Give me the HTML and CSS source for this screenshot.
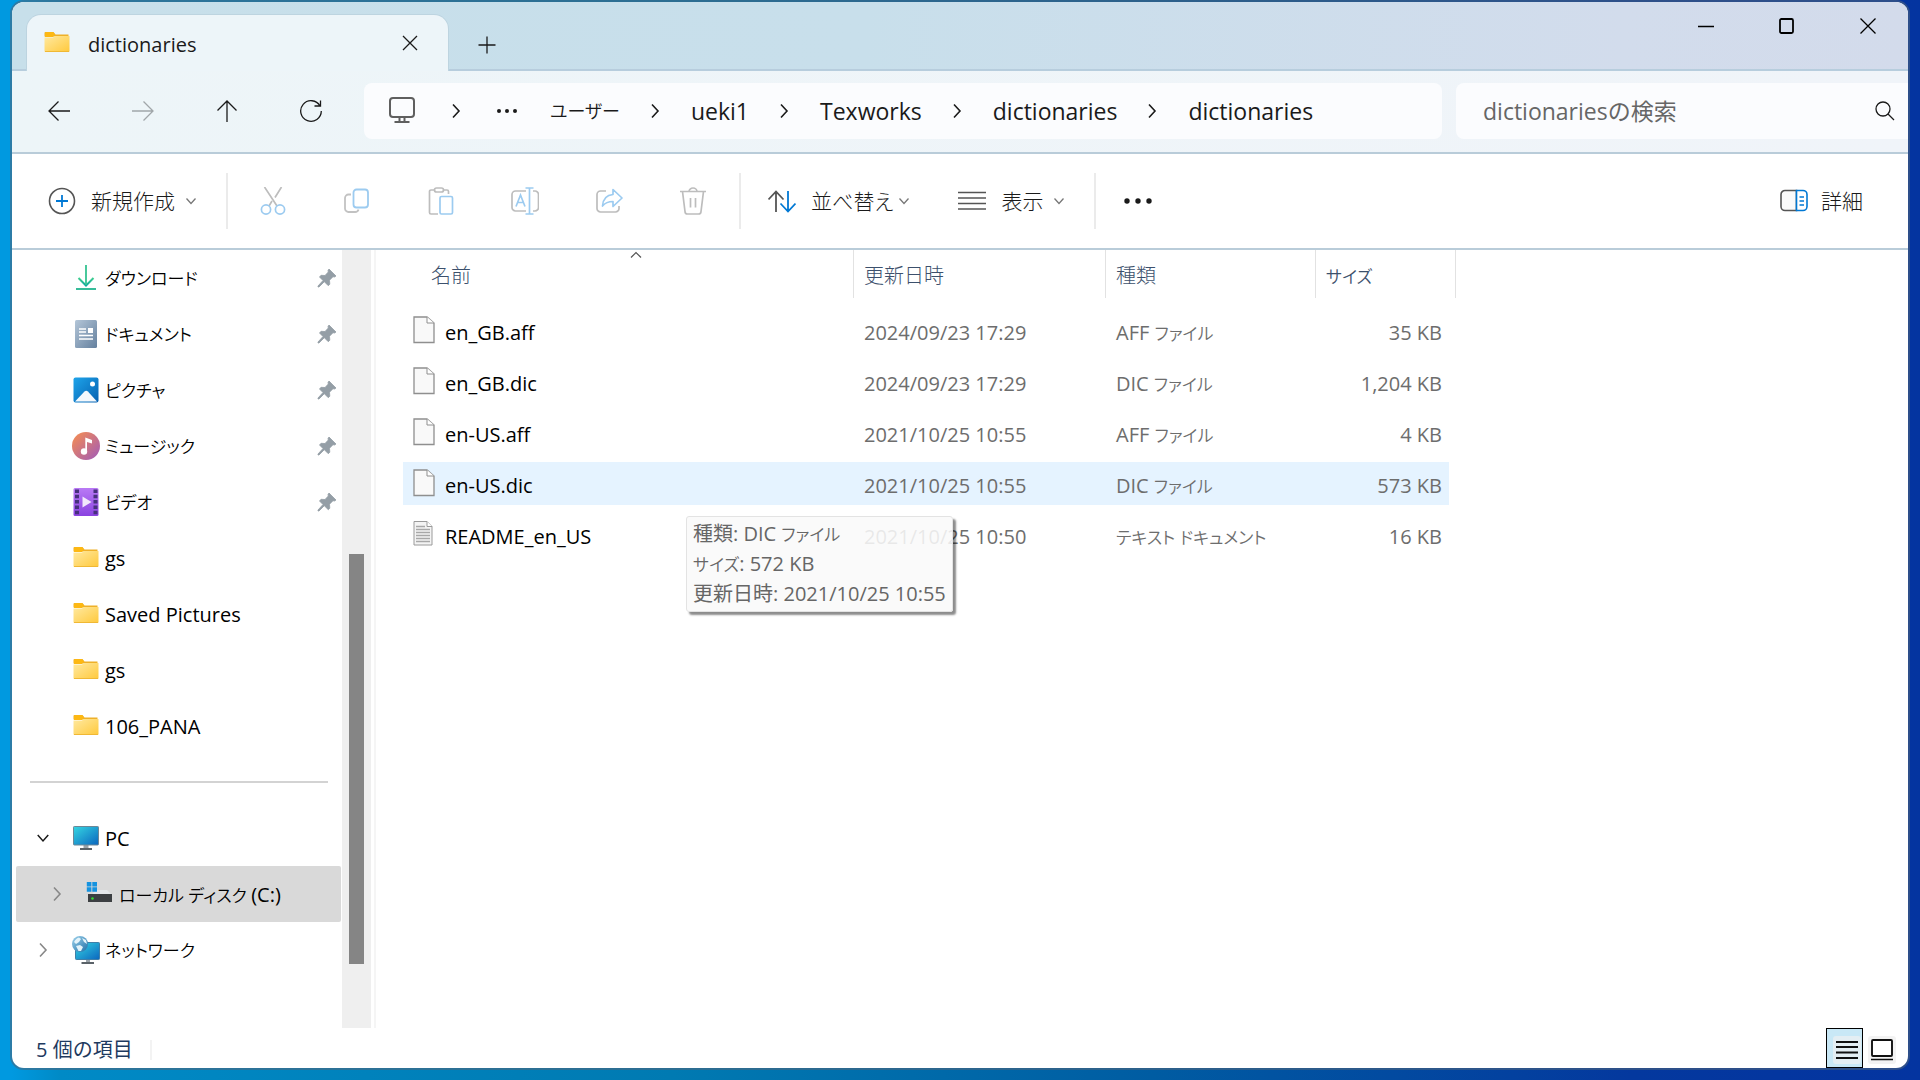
FILE: index.html
```html
<!DOCTYPE html>
<html lang="ja">
<head>
<meta charset="utf-8">
<meta name="viewport" content="width=device-width, initial-scale=1">
<title>dictionaries</title>
<link rel="stylesheet" href="styles.css">
</head>
<body>
<svg class="defs" width="0" height="0" aria-hidden="true">
  <defs>
    <linearGradient id="g-folder" x1="0" y1="0" x2="1" y2="1"><stop offset="0" stop-color="#ffe9a0"/><stop offset="1" stop-color="#ffc93c"/></linearGradient>
    <linearGradient id="g-doc" x1="0" y1="0" x2="1" y2="1"><stop offset="0" stop-color="#b4c6d8"/><stop offset="1" stop-color="#64809e"/></linearGradient>
    <linearGradient id="g-down" x1="0" y1="0" x2="0" y2="1"><stop offset="0" stop-color="#3fcf8e"/><stop offset="1" stop-color="#0fa8a0"/></linearGradient>
    <linearGradient id="g-pic" x1="0" y1="0" x2="1" y2="1"><stop offset="0" stop-color="#1ea4ea"/><stop offset="1" stop-color="#0560b0"/></linearGradient>
    <linearGradient id="g-music" x1="0" y1="0" x2="1" y2="1"><stop offset="0.1" stop-color="#f08a58"/><stop offset="0.9" stop-color="#a85fb0"/></linearGradient>
    <linearGradient id="g-video" x1="0" y1="0" x2="0" y2="1"><stop offset="0" stop-color="#b97af5"/><stop offset="1" stop-color="#8a42e0"/></linearGradient>
    <linearGradient id="g-pc" x1="0" y1="0" x2="1" y2="1"><stop offset="0" stop-color="#35d6e2"/><stop offset="1" stop-color="#0b66bf"/></linearGradient>
    <linearGradient id="g-globe" x1="0" y1="0" x2="1" y2="1"><stop offset="0" stop-color="#9fd3ec"/><stop offset="1" stop-color="#1f6fa8"/></linearGradient>
    <symbol id="folder" viewBox="0 0 26 22"><path d="M0.500 2a1 1 0 0 1 1-1h8l2 2.500h13v2H0.500z" fill="#eeb029"/><path d="M1 6V2.500A1.500 1.500 0 0 1 2.500 1H9l2 2.500L9 6z" fill="#fdb813"/><path d="M0.500 6.500H9L11 5h14.500v15a1 1 0 0 1-1 1h-23a1 1 0 0 1-1-1z" fill="url(#g-folder)"/><path d="M1 20.500h24" stroke="#f0b834"/></symbol>
    <symbol id="pin" viewBox="0 0 20 20"><path d="M12 1l7 7-1.500 1-1.500-.3-3.500 3.500.3 4-1.500 1.500-4-4L2 19l-1 0 0-1 5-5.500L2.500 9 4 7.300l4 .2L11.300 4 11 2.500z" fill="#949ea6" stroke="#949ea6" stroke-width=".8" stroke-linejoin="round"/></symbol>
    <symbol id="chev-d" viewBox="0 0 12 12"><path d="M1.500 3.500L6 8.500l4.500-5" fill="none" stroke="currentColor" stroke-width="1.300"/></symbol>
    <symbol id="chev-r" viewBox="0 0 12 16"><path d="M3 1.500L9 8l-6 6.500" fill="none" stroke="currentColor" stroke-width="1.600"/></symbol>
    <symbol id="file" viewBox="0 0 22 28"><path d="M1 1h13l7 6v19.500H1z" fill="#f9f9f9" stroke="#8f8f8f" stroke-width="1.300"/><path d="M14 1v6h7" fill="#fff" stroke="#8f8f8f"/></symbol>
  </defs>
</svg>
<div class="window">
  <header class="titlebar">
    <div class="tab">
      <svg class="tab-icon" width="26" height="22"><use href="#folder"/></svg>
      <span class="tab-title">dictionaries</span>
      <button class="icon-btn tab-close" aria-label="タブを閉じる"><svg width="18" height="18" viewBox="0 0 18 18"><path d="M2 2l14 14M16 2L2 16" class="ln"/></svg></button>
    </div>
    <button class="icon-btn new-tab" aria-label="新しいタブ"><svg width="18" height="18" viewBox="0 0 18 18"><path d="M9 .5v17M.5 9h17" class="ln"/></svg></button>
    <div class="caption">
      <button class="icon-btn" aria-label="最小化"><svg width="16" height="16" viewBox="0 0 16 16"><path d="M0 8.500h16" class="ln"/></svg></button>
      <button class="icon-btn" aria-label="最大化"><svg width="16" height="16" viewBox="0 0 16 16"><rect x="1" y="1" width="13" height="14" rx="1.500" class="ln bold"/></svg></button>
      <button class="icon-btn" aria-label="閉じる"><svg width="16" height="16" viewBox="0 0 16 16"><path d="M.5 .5l15 15M15.500 .5L.5 15.500" class="ln"/></svg></button>
    </div>
  </header>

  <nav class="navbar" aria-label="ナビゲーション">
    <button class="icon-btn nav-btn" aria-label="戻る"><svg width="22" height="22" viewBox="0 0 22 22"><path d="M22 11H1M10.500 1.500L1 11l9.500 9.500" class="ln"/></svg></button>
    <button class="icon-btn nav-btn" aria-label="進む" disabled><svg width="22" height="22" viewBox="0 0 22 22"><path d="M0 11h21M11.500 1.500L21 11l-9.500 9.500" class="ln"/></svg></button>
    <button class="icon-btn nav-btn" aria-label="上へ"><svg width="22" height="22" viewBox="0 0 22 22"><path d="M11 22V1M1.500 10.500L11 1l9.500 9.500" class="ln"/></svg></button>
    <button class="icon-btn nav-btn" aria-label="更新"><svg width="24" height="24" viewBox="0 0 24 24"><path d="M21 7A10.300 10.300 0 1 0 22.300 12M21.500 1.500V7H15.500" class="ln"/></svg></button>
    <div class="address">
      <svg class="monitor" width="28" height="28" viewBox="0 0 28 28"><rect x="2" y="1" width="24" height="19" rx="3" fill="none" stroke="#5f5f5f" stroke-width="2"/><path d="M11.500 20v5M16.500 20v5M6.500 25h15" fill="none" stroke="#5f5f5f" stroke-width="2"/></svg>
      <svg class="crumb-sep wide" width="12" height="16"><use href="#chev-r"/></svg>
      <button class="icon-btn dots" aria-label="その他の場所"><svg width="22" height="6" viewBox="0 0 22 6"><g fill="#1a1a1a"><circle cx="3" cy="3" r="2"/><circle cx="11" cy="3" r="2"/><circle cx="19" cy="3" r="2"/></g></svg></button>
      <a href="#" class="crumb-kana">ユーザー</a>
      <svg class="crumb-sep" width="12" height="16"><use href="#chev-r"/></svg>
      <a href="#">ueki1</a>
      <svg class="crumb-sep" width="12" height="16"><use href="#chev-r"/></svg>
      <a href="#">Texworks</a>
      <svg class="crumb-sep" width="12" height="16"><use href="#chev-r"/></svg>
      <a href="#">dictionaries</a>
      <svg class="crumb-sep" width="12" height="16"><use href="#chev-r"/></svg>
      <a href="#">dictionaries</a>
    </div>
    <label class="search">
      <input type="text" placeholder="dictionariesの検索" aria-label="検索">
      <svg width="20" height="20" viewBox="0 0 20 20"><circle cx="8" cy="8" r="7" class="ln"/><path d="M13 13l6 6" class="ln"/></svg>
    </label>
  </nav>

  <div class="commands" role="toolbar" aria-label="コマンド">
    <button class="cmd new"><svg width="28" height="28" viewBox="0 0 28 28"><circle cx="14" cy="14" r="12.500" fill="none" stroke="#555" stroke-width="1.600"/><path d="M14 8v12M8 14h12" stroke="#0078d4" stroke-width="1.800"/></svg><span>新規作成</span><svg class="drop" width="12" height="12"><use href="#chev-d"/></svg></button>
    <span class="rule"></span>
    <div class="tools">
      <button class="icon-btn" aria-label="切り取り" disabled><svg width="28" height="28" viewBox="0 0 28 28" fill="none" stroke-width="1.700"><path d="M5.500 0l12.500 19M22.500 0L16 10.500M10 19l3-5" stroke="#bdbdbd"/><circle cx="7" cy="22.500" r="4.600" stroke="#9ccbf0"/><circle cx="21" cy="22.500" r="4.600" stroke="#9ccbf0"/></svg></button>
      <button class="icon-btn" aria-label="コピー" disabled><svg width="28" height="28" viewBox="0 0 28 28" fill="none" stroke-width="1.800"><path d="M8 7.500H5.500A3.500 3.500 0 0 0 2 11V21.500A3.500 3.500 0 0 0 5.500 25H12a3.500 3.500 0 0 0 3.500-2.500" stroke="#c2c2c2"/><rect x="10.500" y="2.500" width="14.500" height="18" rx="3" stroke="#9ccbf0"/></svg></button>
      <button class="icon-btn" aria-label="貼り付け" disabled><svg width="28" height="28" viewBox="0 0 28 28" fill="none" stroke-width="1.700"><path d="M7.500 3H4A1.500 1.500 0 0 0 2.500 4.500v21A1.500 1.500 0 0 0 4 27H11M16.500 3h3.500A1.500 1.500 0 0 1 21.500 4.500V7" stroke="#bdbdbd"/><rect x="7.500" y="1" width="9" height="4" rx="2" stroke="#bdbdbd"/><rect x="13" y="9.500" width="12.500" height="17.500" rx="1.500" stroke="#9ccbf0"/></svg></button>
      <button class="icon-btn" aria-label="名前の変更" disabled><svg width="28" height="28" viewBox="0 0 28 28" fill="none" stroke-width="1.700"><path d="M15 4H4.500A3.500 3.500 0 0 0 1 7.500v13A3.500 3.500 0 0 0 4.500 24H15M22 4h2a3.500 3.500 0 0 1 3.500 3.500v13A3.500 3.500 0 0 1 24 24h-2" stroke="#bdbdbd"/><path d="M14.500 1h8M18.500 1v26M14.500 27h8M5 19.500L9.500 8 14 19.500M6.500 15.500h6" stroke="#9ccbf0"/></svg></button>
      <button class="icon-btn" aria-label="共有" disabled><svg width="28" height="28" viewBox="0 0 28 28" fill="none" stroke-width="1.700"><path d="M11 4H5.500A3.500 3.500 0 0 0 2 7.500v14A3.500 3.500 0 0 0 5.500 25h15a3.500 3.500 0 0 0 3.500-3.500V19" stroke="#bdbdbd"/><path d="M18 2.500L27 11l-9 8.500V14.500c-5 0-8 1.500-10.500 4.500 .5-7 4-11 10.500-11.500z" stroke="#9ccbf0" stroke-linejoin="round"/></svg></button>
      <button class="icon-btn" aria-label="削除" disabled><svg width="28" height="28" viewBox="0 0 28 28" fill="none" stroke="#bdbdbd" stroke-width="1.700"><path d="M1 4.500h26M10 4.500a4 3.500 0 0 1 8 0M3.500 4.500L6 24.500A2.500 2.500 0 0 0 8.500 27h11a2.500 2.500 0 0 0 2.500-2.500l2.500-20M11.500 11v9.500M16.500 11v9.500"/></svg></button>
    </div>
    <span class="rule"></span>
    <button class="cmd sort"><svg width="28" height="28" viewBox="0 0 28 28" fill="none" stroke-width="1.800"><path d="M8 25V4.500M.5 12.500L8 4.500l7.500 8" stroke="#555"/><path d="M20 4v20.500M12.500 16.500l7.500 8 7.500-8" stroke="#0078d4"/></svg><span>並べ替え</span><svg class="drop" width="12" height="12"><use href="#chev-d"/></svg></button>
    <button class="cmd view"><svg width="28" height="28" viewBox="0 0 28 28"><path d="M0 5.500h28M0 11h28M0 16.500h28M0 22h28" stroke="#555" stroke-width="1.700"/></svg><span>表示</span><svg class="drop" width="12" height="12"><use href="#chev-d"/></svg></button>
    <span class="rule"></span>
    <button class="icon-btn more" aria-label="もっと見る"><svg width="28" height="8" viewBox="0 0 28 8"><g fill="#1a1a1a"><circle cx="3" cy="4" r="2.700"/><circle cx="14" cy="4" r="2.700"/><circle cx="25" cy="4" r="2.700"/></g></svg></button>
    <button class="cmd details"><svg width="28" height="28" viewBox="0 0 28 28"><path d="M16.500 3.500H5a4 4 0 0 0-4 4v12a4 4 0 0 0 4 4h11.500z" fill="#fafafa" stroke="#555" stroke-width="1.600"/><path d="M16.500 3.500H23a4 4 0 0 1 4 4v12a4 4 0 0 1-4 4h-6.500zM19.500 10h4.500M19.500 14h4.500M19.500 18h4.500" fill="#fff" stroke="#0078d4" stroke-width="1.600"/></svg><span>詳細</span></button>
  </div>

  <div class="content">
    <nav class="tree" aria-label="フォルダー">
      <a href="#" class="node kana"><svg width="28" height="28" viewBox="0 0 28 28"><path d="M6.500 14l7.500 7.500 7.500-7.500" fill="none" stroke="url(#g-down)" stroke-width="2"/><path d="M4 25h20" stroke="#21b58e" stroke-width="1.800"/><path d="M14 1v20" stroke="#35c391" stroke-width="1.800"/></svg><span>ダウンロード</span><svg class="pin" width="20" height="20"><use href="#pin"/></svg></a>
      <a href="#" class="node kana"><svg width="28" height="28" viewBox="0 0 28 28"><rect x="3" width="22" height="28" rx="1.500" fill="url(#g-doc)"/><path d="M7 9h7M7 12h7M7 15.500h14M7 19h14" stroke="#fff" stroke-width="1.500"/><rect x="16" y="8" width="5" height="5" fill="#fff"/></svg><span>ドキュメント</span><svg class="pin" width="20" height="20"><use href="#pin"/></svg></a>
      <a href="#" class="node kana"><svg width="28" height="28" viewBox="0 0 28 28"><rect x="1.500" y="1.500" width="25" height="25" rx="2" fill="url(#g-pic)"/><circle cx="20.500" cy="8" r="2.500" fill="#fff"/><path d="M3 25.500L12.500 15.500q1.700-1.500 3.400 0L25 25.500z" fill="#f4f8fc"/></svg><span>ピクチャ</span><svg class="pin" width="20" height="20"><use href="#pin"/></svg></a>
      <a href="#" class="node kana"><svg width="28" height="28" viewBox="0 0 28 28"><circle cx="14" cy="14" r="14" fill="url(#g-music)"/><circle cx="12" cy="19.500" r="3.200" fill="#fff"/><path d="M13.300 19.500V5.500L20 8v3.500l-5-1.500v9.500z" fill="#fff"/></svg><span>ミュージック</span><svg class="pin" width="20" height="20"><use href="#pin"/></svg></a>
      <a href="#" class="node kana"><svg width="28" height="28" viewBox="0 0 28 28"><rect x="1.500" width="25" height="28" rx="1.500" fill="url(#g-video)"/><path d="M5 1.500v26M23.500 1.500v26" stroke="#47307c" stroke-width="4" stroke-dasharray="3.500 1.800"/><path d="M10.500 8.500v11l9-5.500z" fill="#f1e8fb"/></svg><span>ビデオ</span><svg class="pin" width="20" height="20"><use href="#pin"/></svg></a>
      <a href="#" class="node"><svg class="folder" width="28" height="22"><use href="#folder"/></svg><span>gs</span></a>
      <a href="#" class="node"><svg class="folder" width="28" height="22"><use href="#folder"/></svg><span>Saved Pictures</span></a>
      <a href="#" class="node"><svg class="folder" width="28" height="22"><use href="#folder"/></svg><span>gs</span></a>
      <a href="#" class="node"><svg class="folder" width="28" height="22"><use href="#folder"/></svg><span>106_PANA</span></a>
      <hr>
      <a href="#" class="node root"><svg class="twist open" width="14" height="14"><use href="#chev-d"/></svg><svg width="28" height="28" viewBox="0 0 28 28"><path d="M11.500 21h5v3h-5z" fill="#9aa3aa"/><rect x="1.500" y="2.500" width="25" height="18.500" rx=".8" fill="url(#g-pc)" stroke="#6d8796"/><path d="M8 25h12" stroke="#5a6268" stroke-width="2"/></svg><span>PC</span></a>
      <a href="#" class="node root child selected" aria-current="true"><svg class="twist" width="12" height="16"><use href="#chev-r"/></svg><svg width="28" height="28" viewBox="0 0 28 28"><path d="M6 15l3-5h12l5 5z" fill="#e4e7ea"/><path d="M2 14h24v8H2z" fill="#3c3f42"/><circle cx="6.500" cy="18.500" r="1.300" fill="#2fe02f"/><path d="M.8 2h4.600v4.400H.8zM6.300 2H11v4.400H6.300zM.8 7.300h4.600v4.500H.8zM6.300 7.300H11v4.500H6.300z" fill="#1593e0"/></svg><span class="kana">ローカル ディスク <span class="latin">(C:)</span></span></a>
      <a href="#" class="node root kana"><svg class="twist" width="12" height="16"><use href="#chev-r"/></svg><svg width="28" height="28" viewBox="0 0 28 28"><path d="M14 23.500h4v3h-4z" fill="#9aa3aa"/><rect x="3.500" y="6.500" width="24" height="17" rx=".8" fill="url(#g-pc)" stroke="#3f7fa8"/><path d="M9.500 27h12.500" stroke="#5a6268" stroke-width="2"/><circle cx="8" cy="8" r="8" fill="url(#g-globe)"/><path d="M2 6q2-4 5-4.500l2 1.500-2 3-3 2zM10 2l4 2 1 4-3-2zM4 10l4-1 3 2-2 4-2.500 0z" fill="#e3f3fa"/></svg><span>ネットワーク</span></a>
    </nav>
    <div class="scrollbar" aria-hidden="true"><div class="thumb"></div></div>
    <main class="files">
      <table>
        <colgroup><col class="col-name"><col class="col-date"><col class="col-type"><col class="col-size"></colgroup>
        <thead>
          <tr><th scope="col" aria-sort="ascending"><svg class="sort-mark" width="12" height="8" viewBox="0 0 12 8"><path d="M1 6.500L6 1.500l5 5" fill="none" stroke="#555" stroke-width="1.200"/></svg>名前</th><th scope="col">更新日時</th><th scope="col">種類</th><th scope="col"><span class="kana">サイズ</span></th></tr>
        </thead>
        <tbody>
          <tr><td><span class="name"><svg width="22" height="28"><use href="#file"/></svg>en_GB.aff</span></td><td>2024/09/23 17:29</td><td>AFF <span class="kana">ファイル</span></td><td>35 KB</td></tr>
          <tr><td><span class="name"><svg width="22" height="28"><use href="#file"/></svg>en_GB.dic</span></td><td>2024/09/23 17:29</td><td>DIC <span class="kana">ファイル</span></td><td>1,204 KB</td></tr>
          <tr><td><span class="name"><svg width="22" height="28"><use href="#file"/></svg>en-US.aff</span></td><td>2021/10/25 10:55</td><td>AFF <span class="kana">ファイル</span></td><td>4 KB</td></tr>
          <tr class="hover"><td><span class="name"><svg width="22" height="28"><use href="#file"/></svg>en-US.dic</span></td><td>2021/10/25 10:55</td><td>DIC <span class="kana">ファイル</span></td><td>573 KB</td></tr>
          <tr><td><span class="name"><svg width="22" height="28" viewBox="0 0 22 28"><path d="M1 1.500h13l5 5v18.500H1z" fill="#f4f4f4" stroke="#9a9a9a"/><path d="M14 1.500v5h5" fill="#fff" stroke="#9a9a9a"/><path d="M3 6.500h9M3 9.500h14M3 12.500h14M3 15.500h14M3 18.500h14M3 21.500h14" stroke="#a8a8a8" stroke-width="1.300"/></svg>README_en_US</span></td><td>2021/10/25 10:50</td><td><span class="kana">テキスト ドキュメント</span></td><td>16 KB</td></tr>
        </tbody>
      </table>
      <div class="tooltip" role="tooltip">
        <div>種類: DIC <span class="kana">ファイル</span></div>
        <div><span class="kana">サイズ</span>: 572 KB</div>
        <div>更新日時: 2021/10/25 10:55</div>
      </div>
    </main>
  </div>

  <footer class="status">
    <span class="count">5 個の項目</span>
    <div class="views">
      <button class="view-btn on" aria-label="詳細表示"><svg width="28" height="28" viewBox="0 0 28 28"><rect width="28" height="28" rx="3" fill="#e4eef3"/><path d="M3 6h22M3 11h22M3 16.500h22M3 22h22" stroke="#111" stroke-width="1.800"/></svg></button>
      <button class="view-btn" aria-label="大アイコン"><svg width="28" height="28" viewBox="0 0 28 28"><rect width="28" height="28" rx="3" fill="#f3f3f3"/><rect x="4" y="4" width="20" height="16" rx="1" fill="#fff" stroke="#111" stroke-width="1.900"/><path d="M3 23.500h22" stroke="#111" stroke-width="1.700"/></svg></button>
    </div>
  </footer>
</div>
</body>
</html>
```

FILE: styles.css
```css
*, *::before, *::after { box-sizing: border-box; }

body {
  margin: 0;
  min-height: 100vh;
  display: flex;
  padding: 2px 12px 12px 12px;
  background: linear-gradient(90deg, #0099e0 0, #0099e0 12px, #008ac6 60px, #007ab2 35%, #005ca2 60%, #04389e 85%, #0434a0 100%);
  font-family: "Open Sans", "Noto Sans CJK JP", sans-serif;
  font-size: 20px;
  line-height: 30px;
  color: #000;
}

svg { display: block; flex: none; }
.defs { position: absolute; }
a { color: inherit; text-decoration: none; }
button { font: inherit; color: inherit; border: 0; padding: 0; background: none; }

.kana { font-size: 17px; font-weight: 350; line-height: 20px; font-feature-settings: "palt"; }
.latin { font-size: 20px; font-weight: 400; }
.ln { fill: none; stroke: currentColor; stroke-width: 1.3; }
.ln.bold { stroke-width: 1.8; }

.window {
  flex: 1;
  min-width: 0;
  display: flex;
  flex-direction: column;
  overflow: hidden;
  border-radius: 12px;
  background: #fff;
  box-shadow: 0 0 0 2px rgba(80, 100, 120, .55);
}

.icon-btn { display: flex; align-items: center; justify-content: center; color: #1a1a1a; }

/* tab strip */
.titlebar {
  display: flex;
  height: 69px;
  padding-left: 15px;
  background: linear-gradient(90deg, #c7dfea 0, #c8dfeb 45%, #d2dcec 85%, #d3dbeb 100%);
  box-shadow: inset 0 -2px #b7cddd;
}
.tab {
  display: flex;
  align-items: center;
  width: 421px;
  margin-top: 13px;
  padding: 0 23px 0 17px;
  border-radius: 14px 14px 0 0;
  background: #edf5f9;
  box-shadow: 0 0 0 1px #bdd4e0;
  clip-path: inset(-2px -2px 0 -2px);
}
.tab-icon { margin-bottom: 2px; }
.tab-title { flex: 1; margin-left: 18px; padding-top: 3px; font-weight: 500; color: #1a1a1a; }
.tab-close { width: 30px; height: 30px; }
.new-tab { width: 42px; margin-left: 18px; padding-top: 16px; }
.caption { display: flex; margin-left: auto; }
.caption .icon-btn { width: 81px; height: 48px; color: #000; }

/* navigation bar */
.navbar {
  display: flex;
  align-items: center;
  height: 83px;
  padding: 10px 0 12px 5px;
  border-bottom: 2px solid #b9ccd9;
  background: linear-gradient(90deg, #edf5f8, #f0f4f9);
}
.nav-btn { width: 84px; height: 48px; }
.nav-btn:disabled { color: #a0a6a9; }
.address, .search {
  display: flex;
  align-items: center;
  height: 56px;
  background: #fbfcfe;
  font-size: 23px;
  color: #1a1a1a;
}
.address {
  flex: 1;
  min-width: 0;
  margin-left: 11px;
  padding-left: 24px;
  border-radius: 8px;
  white-space: nowrap;
}
.crumb-sep { margin: 0 30px 0 29px; }
.crumb-sep.wide { margin: 0 34px; }
.dots { margin-right: 32px; }
.crumb-kana { font-size: 18px; font-weight: 350; font-feature-settings: "palt"; }
.search { width: 452px; margin-left: 14px; padding: 0 13px 0 27px; border-radius: 8px 0 0 8px; }
.search input {
  flex: 1;
  min-width: 0;
  border: 0;
  padding: 0;
  outline: 0;
  background: none;
  font: inherit;
  color: inherit;
}
.search input::placeholder { color: #666; opacity: 1; }

/* command bar */
.commands {
  display: flex;
  align-items: center;
  height: 96px;
  padding: 0 45px 0 36px;
  border-bottom: 2px solid #b9ccd9;
  color: #1a1a1a;
}
.cmd {
  display: flex;
  align-items: center;
  font-size: 21px;
  font-weight: 300;
  font-feature-settings: "palt";
  white-space: nowrap;
}
.cmd span { margin: 0 10px 0 15px; }
.drop { color: #777; }
.rule { width: 2px; height: 56px; background: #ebebeb; }
.new { margin-right: 29px; }
.tools { display: flex; padding: 0 4px 0 3px; }
.tools .icon-btn { width: 84px; height: 48px; }
.sort { margin: 0 48px 0 27px; }
.sort span { margin-right: 5px; }
.view { margin-right: 29px; }
.more { margin-left: 28px; }
.details { margin-left: auto; }
.details span { margin: 0 0 0 13px; }

/* content */
.content { display: flex; flex: 1; min-height: 0; }
.tree { width: 330px; padding: 0 1px 0 4px; }
.node {
  display: flex;
  align-items: center;
  height: 56px;
  padding: 0 4px 0 56px;
  border-radius: 2px;
  white-space: nowrap;
}
.node > span { margin-left: 5px; padding-top: 2px; }
.node .folder { margin-bottom: 3px; }
.pin { margin-left: auto; }
.node.root { padding-left: 20px; }
.node.child { padding-left: 34px; }
.twist { width: 14px; margin-right: 22px; color: #888; }
.twist.open { color: #1a1a1a; }
.selected { background: #d9d9d9; }
.tree hr { height: 2px; margin: 27px 13px 27px 14px; border: 0; background: #d3d3d3; }

.scrollbar { display: flex; justify-content: center; width: 29px; background: #efefef; }
.thumb { width: 15px; margin: 304px 0 64px; background: #858585; }

.files {
  position: relative;
  flex: 1;
  min-width: 0;
  margin-left: 3px;
  padding-left: 27px;
  border-left: 2px solid #f5f5f5;
}
table { table-layout: fixed; width: 1053px; border-collapse: separate; border-spacing: 0; }
.col-name { width: 451px; }
.col-date { width: 252px; }
.col-type { width: 210px; }
.col-size { width: 140px; }
th {
  position: relative;
  height: 55px;
  padding: 0 0 4px 10px;
  font-weight: 300;
  text-align: left;
  color: #3c506c;
  background: linear-gradient(#e2e2e2, #e2e2e2) right top / 1px 48px no-repeat;
}
th:first-child { padding-left: 28px; }
.sort-mark { position: absolute; left: 227px; top: 1px; }
td {
  height: 51px;
  padding: 4px 0 0 10px;
  border: solid transparent;
  border-width: 4px 0;
  background-clip: padding-box;
  color: #6d6d6d;
  white-space: nowrap;
}
td:first-child { color: #000; }
td:last-child { border-right-width: 7px; padding-right: 7px; text-align: right; }
.name { display: flex; align-items: center; gap: 10px; }
.name svg { margin-bottom: 6px; }
.hover td { background-color: #e5f3ff; }

.tooltip {
  position: absolute;
  left: 310px;
  top: 266px;
  padding: 2px 6px;
  border: 1px solid #e3e3e3;
  border-radius: 3px;
  background: rgba(249, 249, 249, .88);
  box-shadow: 3px 3px 2px rgba(0, 0, 0, .45);
  color: #666;
  white-space: nowrap;
}

/* status bar */
.status { display: flex; align-items: center; height: 40px; padding: 0 8px 0 24px; }
.count { margin-top: 3px; padding-right: 17px; border-right: 2px solid #f3f3f3; line-height: 20px; color: #1e3a5f; }
.views { display: flex; margin-left: auto; }
.view-btn { display: flex; align-items: center; justify-content: center; width: 37px; height: 40px; padding-top: 4px; border: 1px solid transparent; }
.view-btn.on { padding-left: 4px; border-color: #000; background: #c9e8f6; }
```
